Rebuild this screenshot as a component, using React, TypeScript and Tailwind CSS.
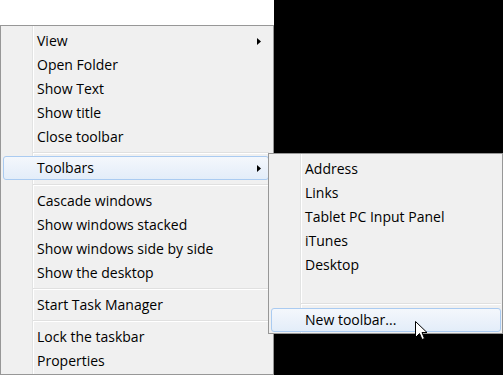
import React from "react";

type Row = { label: string; sub?: boolean; hot?: boolean } | "sep" | "sep7" | "sep9" | "gap";

const mainRows: Row[] = [
  { label: "View", sub: true },
  { label: "Open Folder" },
  { label: "Show Text" },
  { label: "Show title" },
  { label: "Close toolbar" },
  "sep7",
  { label: "Toolbars", sub: true, hot: true },
  "sep9",
  { label: "Cascade windows" },
  { label: "Show windows stacked" },
  { label: "Show windows side by side" },
  { label: "Show the desktop" },
  "sep",
  { label: "Start Task Manager" },
  "sep",
  { label: "Lock the taskbar" },
  { label: "Properties" },
];

const toolbarRows: Row[] = [
  { label: "Address" },
  { label: "Links" },
  { label: "Tablet PC Input Panel" },
  { label: "iTunes" },
  { label: "Desktop" },
  "gap",
  "sep",
  { label: "New toolbar...", hot: true },
];

const sepClass = {
  sep: "h-[8px] pt-[3px] pl-[30px]",
  sep7: "h-[7px] pt-[3px] pl-[30px]",
  sep9: "h-[9px] pt-[4px] pl-[30px]",
};

function Arrow() {
  return (
    <svg width="4" height="7" viewBox="0 0 4 7" className="absolute right-[7px] top-[8px]">
      <path d="M0 0 L4 3.5 L0 7 Z" fill="#000" />
    </svg>
  );
}

function MenuRows({ rows }: { rows: Row[] }) {
  return (
    <>
      {rows.map((row, i) => {
        if (row === "gap") return <div key={i} className="h-[23px]" />;
        if (typeof row === "string") {
          return (
            <div key={i} className={sepClass[row]}>
              <div className="h-px bg-[#e0e0e0]" />
              <div className="h-px bg-white" />
            </div>
          );
        }
        return (
          <div
            key={i}
            className={
              row.hot
                ? "relative h-[24px] rounded-[3px] border border-[#aacbf1] bg-gradient-to-b from-[#f4f7fc] to-[#e3edf9] pl-[33px] leading-[22px]"
                : "relative h-[24px] border border-transparent pl-[33px] leading-[22px]"
            }
          >
            {row.label}
            {row.sub && <Arrow />}
          </div>
        );
      })}
    </>
  );
}

// menu panel with the Win7 icon gutter drawn as a background stripe
const panel =
  "border border-[#979797] bg-[#f0f0f0] bg-[linear-gradient(to_right,transparent_31px,#e2e3e3_31px,#e2e3e3_32px,#ffffff_32px,#ffffff_33px,transparent_33px)] pt-[3px] pl-[2px]";

export default function App() {
  return (
    <div
      className="relative flex h-[375px] w-[503px] overflow-hidden bg-black text-[14px] text-black"
      style={{ fontFamily: '"Open Sans", "Noto Sans", sans-serif' }}
    >
      <div className="flex w-[274px] flex-col bg-white">
        <div className="h-[25px]" />
        <div className={`flex-1 pr-[4px] ${panel}`}>
          <MenuRows rows={mainRows} />
        </div>
      </div>

      {/* Toolbars submenu, open over the main menu */}
      <div className={`absolute left-[268px] top-[153px] h-[181px] w-[235px] pr-[1px] ${panel}`}>
        <MenuRows rows={toolbarRows} />
      </div>

      <svg width="13" height="21" viewBox="0 0 13 21" className="absolute left-[415px] top-[321px]">
        <path
          d="M0.5 0.5 L0.5 16.5 L4.5 12.5 L7 18.5 L9.5 17.5 L7 11.5 L12 11.5 Z"
          fill="#fff"
          stroke="#000"
          strokeWidth="1"
        />
      </svg>
    </div>
  );
}
